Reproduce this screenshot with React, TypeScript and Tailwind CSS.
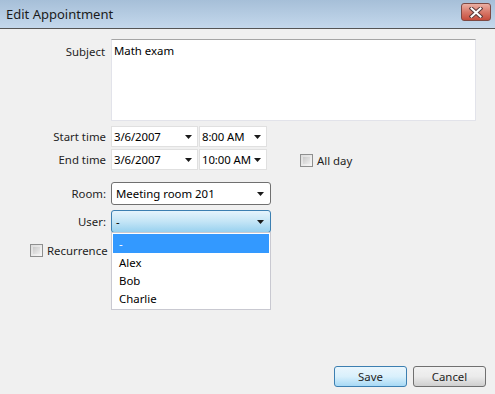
import React from "react";

const Arrow = () => (
  <svg width="7" height="4" viewBox="0 0 7 4" className="shrink-0">
    <path d="M0 0 H7 L3.5 4 Z" fill="#1a1a1a" />
  </svg>
);

const Check = ({ label }: { label: string }) => (
  <div className="flex items-center gap-[4px] whitespace-nowrap">
    <div className="w-[13px] h-[13px] border border-[#8e8f8f] bg-gradient-to-br from-[#dcdcdc] to-[#f7f7f7] p-[2px]">
      <div className="w-full h-full bg-gradient-to-br from-[#c9c9c9] to-[#eeeeee]" />
    </div>
    <span className="text-[#1e1e1e]">{label}</span>
  </div>
);

const Field = ({ value, width }: { value: string; width: string }) => (
  <div className={`${width} h-[21px] bg-white border border-[#e0e0e0] flex items-center justify-between gap-[3px] pl-[2px] pr-[5px] whitespace-nowrap`}>
    <span className="text-black tracking-[-0.1px]">{value}</span>
    <Arrow />
  </div>
);

export default function App() {
  return (
    <div
      className="w-[495px] h-[394px] bg-[#f0f0f0] flex flex-col text-[11.4px] leading-[15px] overflow-hidden"
      style={{ fontFamily: '"Noto Sans", "Open Sans", sans-serif' }}
    >
      <div className="h-[29px] shrink-0 bg-gradient-to-b from-[#a6bfd8] to-[#c4d8ec] border-b border-[#555] flex items-center justify-between pl-[6px] pr-[4px]">
        <span className="text-[13px] text-[#1b1b1b]">Edit Appointment</span>
        <div className="w-[30px] h-[18px] mb-[4px] rounded-[3px] border border-[#7e4a44] bg-gradient-to-b from-[#eab0a4] via-[#d8796a] to-[#c64c3c] flex items-center justify-center">
          <svg width="14" height="11" viewBox="0 0 14 11">
            <path d="M2.5 1.5 L11.5 9.5 M11.5 1.5 L2.5 9.5" stroke="#5a3a3a" strokeWidth="4" strokeLinecap="square" />
            <path d="M2.5 1.5 L11.5 9.5 M11.5 1.5 L2.5 9.5" stroke="#ffffff" strokeWidth="2" strokeLinecap="square" />
          </svg>
        </div>
      </div>

      <div className="relative flex-1 flex flex-col pt-[10px]">
        <div className="flex">
          <div className="w-[111px] pr-[6px] pt-[5px] text-right text-[#1e1e1e]">Subject</div>
          <div className="w-[365px] h-[82px] bg-white border border-[#e2e3ea] border-t-[#a5a5a5] px-[2px] pt-[3px] text-black">
            Math exam
          </div>
        </div>

        <div className="flex items-center mt-[5px]">
          <div className="w-[111px] pr-[5px] text-right text-[#1e1e1e] whitespace-nowrap">Start time</div>
          <Field value="3/6/2007" width="w-[87px]" />
          <div className="w-[1px]" />
          <Field value="8:00 AM" width="w-[68px]" />
        </div>

        <div className="flex items-center mt-[2px]">
          <div className="w-[111px] pr-[5px] text-right text-[#1e1e1e] whitespace-nowrap">End time</div>
          <Field value="3/6/2007" width="w-[87px]" />
          <div className="w-[1px]" />
          <Field value="10:00 AM" width="w-[68px]" />
          <div className="ml-[33px] pt-[1px]">
            <Check label="All day" />
          </div>
        </div>

        <div className="flex items-center mt-[12px]">
          <div className="w-[111px] pr-[5px] text-right text-[#1e1e1e]">Room:</div>
          <div className="w-[160px] h-[23px] rounded-[3px] bg-white border border-[#707070] flex items-center justify-between pl-[4px] pr-[6px] whitespace-nowrap">
            <span className="text-black">Meeting room 201</span>
            <Arrow />
          </div>
        </div>

        <div className="flex items-center mt-[5px]">
          <div className="w-[111px] pr-[5px] text-right text-[#1e1e1e]">User:</div>
          <div className="w-[160px] h-[23px] rounded-[3px] border border-[#3c7fb1] bg-gradient-to-b from-[#e5f4fc] via-[#c4e5f6] to-[#98d1ef] flex items-center justify-between pl-[4px] pr-[6px]">
            <span className="text-black">-</span>
            <Arrow />
          </div>
        </div>

        <div className="flex items-center mt-[10px] pl-[30px]">
          <Check label="Recurrence" />
        </div>

        <div className="absolute left-[111px] top-[203px] w-[160px] h-[78px] bg-white border border-[#c9c9d1] flex flex-col p-[1px]">
          <div className="h-[20px] bg-[#3399ff] text-white pl-[6px] flex items-center">-</div>
          <div className="h-[19px] pl-[6px] flex items-center text-black">Alex</div>
          <div className="h-[19px] pl-[6px] flex items-center text-black">Bob</div>
          <div className="h-[19px] pl-[6px] flex items-center text-black">Charlie</div>
        </div>

        <div className="mt-auto flex justify-end gap-[6px] pr-[9px] pb-[7px]">
          <button className="w-[73px] h-[21px] rounded-[3px] border border-[#3c7fb1] bg-gradient-to-b from-[#eaf6fd] via-[#d9f0fc] to-[#a7d9f5] text-[#1e1e1e] text-[11.4px] leading-[15px]">
            Save
          </button>
          <button className="w-[73px] h-[21px] rounded-[3px] border border-[#707070] bg-gradient-to-b from-[#f2f2f2] via-[#ebebeb] to-[#cfcfcf] text-[#1e1e1e] text-[11.4px] leading-[15px]">
            Cancel
          </button>
        </div>
      </div>
    </div>
  );
}
